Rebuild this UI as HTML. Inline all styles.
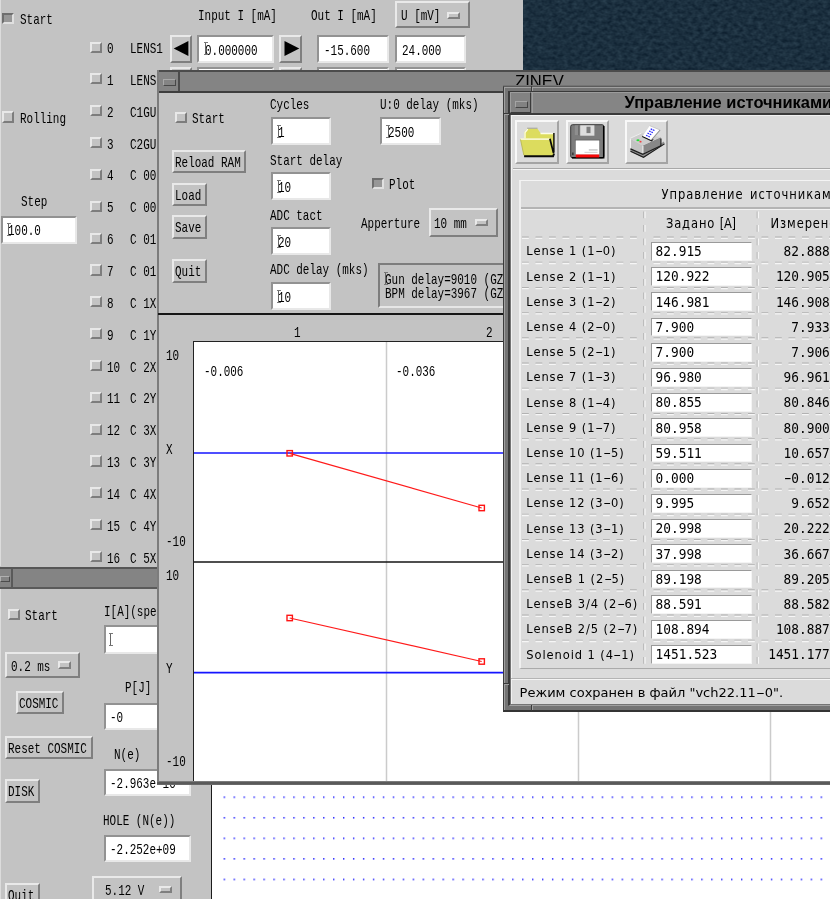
<!DOCTYPE html>
<html><head><meta charset="utf-8"><title>screen</title>
<style>
html,body{margin:0;padding:0}
body{width:830px;height:899px;position:relative;overflow:hidden;background:#c3c3c3;font-family:"Liberation Mono",monospace}
div{position:absolute;box-sizing:border-box}
.t{font:14.8px/14px "Liberation Mono",monospace;color:#000;white-space:pre;transform:scaleX(0.74);transform-origin:0 0}
.cb{width:11.2px;height:11.2px;background:#c3c3c3;border:2px solid;border-color:#e8e8e8 #7d7d7d #7d7d7d #e8e8e8}
.cb.on{background:#979797;border-color:#6e6e6e #e0e0e0 #e0e0e0 #6e6e6e}
.en{background:#fff;border:2px solid;border-color:#929292 #e8e8e8 #e8e8e8 #929292}
.bt{background:#c3c3c3;border:2px solid;border-color:#e9e9e9 #7f7f7f #7f7f7f #e9e9e9}
.ind{width:13.4px;height:7.4px;background:#c3c3c3;border:2px solid;border-color:#e9e9e9 #7f7f7f #7f7f7f #e9e9e9}
.ibeam{width:4px;height:13px}
.ibeam:before{content:"";position:absolute;left:1.5px;top:1px;width:1px;height:11px;background:#666}
.ibeam:after{content:"";position:absolute;left:0;top:0;width:4px;height:13px;border-top:1px solid #777;border-bottom:1px solid #777;box-sizing:border-box}
.win{overflow:hidden}
.m{font-family:"DejaVu Sans Mono","Liberation Mono",monospace;font-size:12.8px;line-height:16px;color:#000;white-space:pre;transform:scaleY(1.07)}
.l{font-family:"DejaVu Sans","Liberation Sans",sans-serif;font-size:11.5px;line-height:16px;letter-spacing:.9px;color:#000;white-space:pre;transform:scaleY(1.07)}
.d{display:inline-block;transform:scaleX(1.9);margin:0 1.6px;letter-spacing:0}
.d2{display:inline-block;transform:scaleX(1.7)}
#root{left:0;top:0;width:830px;height:899px;will-change:transform}
</style></head><body><div id="root">

<div class="win" id="w1" style="left:0;top:0;width:523px;height:568px;background:#c3c3c3">
<div style="left:0;top:0;width:1px;height:568px;background:#dcdcdc"></div>
<div class="cb on" style="left:2.4px;top:12.8px"></div>
<div class="t " style="left:20px;top:13.32px">Start</div>
<div class="cb" style="left:2.4px;top:111.4px"></div>
<div class="t " style="left:20px;top:112.32px">Rolling</div>
<div class="t " style="left:21px;top:195.32px">Step</div>
<div class="en" style="left:1.0px;top:215.7px;width:76px;height:27.9px"></div>
<div class="t " style="left:8px;top:224.32px">100.0</div>
<div class="ibeam" style="left:6.5px;top:223px"></div>
<div class="t " style="left:197.5px;top:8.82px">Input I [mA]</div>
<div class="t " style="left:311px;top:8.82px">Out I [mA]</div>
<div class="bt" style="left:394.6px;top:0.5px;width:75.4px;height:27.9px"></div>
<div class="t " style="left:400.5px;top:9.02px">U [mV]</div>
<div class="ind" style="left:447.1px;top:11.8px"></div>
<div class="cb" style="left:90.4px;top:41.5px"></div>
<div class="t " style="left:107px;top:42.12px">0</div>
<div class="t " style="left:130px;top:42.12px">LENS1</div>
<div class="cb" style="left:90.4px;top:73.3px"></div>
<div class="t " style="left:107px;top:73.96px">1</div>
<div class="t " style="left:130px;top:73.96px">LENS</div>
<div class="cb" style="left:90.4px;top:105.2px"></div>
<div class="t " style="left:107px;top:105.8px">2</div>
<div class="t " style="left:130px;top:105.8px">C1GU</div>
<div class="cb" style="left:90.4px;top:137.0px"></div>
<div class="t " style="left:107px;top:137.64px">3</div>
<div class="t " style="left:130px;top:137.64px">C2GU</div>
<div class="cb" style="left:90.4px;top:168.9px"></div>
<div class="t " style="left:107px;top:169.48px">4</div>
<div class="t " style="left:130px;top:169.48px">C 00</div>
<div class="cb" style="left:90.4px;top:200.7px"></div>
<div class="t " style="left:107px;top:201.32px">5</div>
<div class="t " style="left:130px;top:201.32px">C 00</div>
<div class="cb" style="left:90.4px;top:232.5px"></div>
<div class="t " style="left:107px;top:233.16px">6</div>
<div class="t " style="left:130px;top:233.16px">C 01</div>
<div class="cb" style="left:90.4px;top:264.4px"></div>
<div class="t " style="left:107px;top:265.0px">7</div>
<div class="t " style="left:130px;top:265.0px">C 01</div>
<div class="cb" style="left:90.4px;top:296.2px"></div>
<div class="t " style="left:107px;top:296.84px">8</div>
<div class="t " style="left:130px;top:296.84px">C 1X</div>
<div class="cb" style="left:90.4px;top:328.1px"></div>
<div class="t " style="left:107px;top:328.68px">9</div>
<div class="t " style="left:130px;top:328.68px">C 1Y</div>
<div class="cb" style="left:90.4px;top:359.9px"></div>
<div class="t " style="left:107px;top:360.52px">10</div>
<div class="t " style="left:130px;top:360.52px">C 2X</div>
<div class="cb" style="left:90.4px;top:391.7px"></div>
<div class="t " style="left:107px;top:392.36px">11</div>
<div class="t " style="left:130px;top:392.36px">C 2Y</div>
<div class="cb" style="left:90.4px;top:423.6px"></div>
<div class="t " style="left:107px;top:424.2px">12</div>
<div class="t " style="left:130px;top:424.2px">C 3X</div>
<div class="cb" style="left:90.4px;top:455.4px"></div>
<div class="t " style="left:107px;top:456.04px">13</div>
<div class="t " style="left:130px;top:456.04px">C 3Y</div>
<div class="cb" style="left:90.4px;top:487.3px"></div>
<div class="t " style="left:107px;top:487.88px">14</div>
<div class="t " style="left:130px;top:487.88px">C 4X</div>
<div class="cb" style="left:90.4px;top:519.1px"></div>
<div class="t " style="left:107px;top:519.72px">15</div>
<div class="t " style="left:130px;top:519.72px">C 4Y</div>
<div class="cb" style="left:90.4px;top:550.9px"></div>
<div class="t " style="left:107px;top:551.56px">16</div>
<div class="t " style="left:130px;top:551.56px">C 5X</div>
<div class="bt" style="left:169.8px;top:35.3px;width:21.8px;height:28px"><svg width="20" height="24" style="position:absolute;left:0;top:0"><path d="M1.7 11.4 L16.4 3.9 L16.4 18.9 Z" fill="#000"/></svg></div>
<div class="en" style="left:197px;top:35.3px;width:77.4px;height:28px"></div>
<div class="t " style="left:205px;top:43.62px">0.000000</div>
<div class="ibeam" style="left:203.5px;top:42.3px"></div>
<div class="bt" style="left:278.7px;top:35.3px;width:23.5px;height:28px"><svg width="20" height="24" style="position:absolute;left:0;top:0"><path d="M18.3 11.4 L3.5 3.9 L3.5 18.9 Z" fill="#000"/></svg></div>
<div class="en" style="left:317.3px;top:35.3px;width:71.5px;height:28px"></div>
<div class="t " style="left:324px;top:43.62px">-15.600</div>
<div class="en" style="left:395px;top:35.3px;width:71px;height:28px"></div>
<div class="t " style="left:402px;top:43.62px">24.000</div>
<div class="bt" style="left:169.8px;top:67.14px;width:21.8px;height:28px"><svg width="20" height="24" style="position:absolute;left:0;top:0"><path d="M1.7 11.4 L16.4 3.9 L16.4 18.9 Z" fill="#000"/></svg></div>
<div class="en" style="left:197px;top:67.14px;width:77.4px;height:28px"></div>
<div class="bt" style="left:278.7px;top:67.14px;width:23.5px;height:28px"><svg width="20" height="24" style="position:absolute;left:0;top:0"><path d="M18.3 11.4 L3.5 3.9 L3.5 18.9 Z" fill="#000"/></svg></div>
<div class="en" style="left:317.3px;top:67.14px;width:71.5px;height:28px"></div>
<div class="en" style="left:395px;top:67.14px;width:71px;height:28px"></div>
</div>
<div id="desk" style="left:523px;top:0;width:307px;height:70px;background:#1c303f"><svg width="307" height="70" style="position:absolute;left:0;top:0"><filter id="nz" x="0" y="0" width="100%" height="100%" color-interpolation-filters="sRGB"><feTurbulence type="fractalNoise" baseFrequency="0.2 0.28" numOctaves="2" seed="7"/><feColorMatrix type="matrix" values="0.15 0 0 0 0.032  0.17 0 0 0 0.1  0.17 0 0 0 0.16  0 0 0 0 1"/></filter><rect width="307" height="70" filter="url(#nz)"/></svg></div>
<div class="win" id="w4" style="left:0;top:566px;width:212px;height:333px;background:#c3c3c3">
<div style="left:0;top:1px;width:212px;height:22px;background:#848484;border-top:2px solid #565656;border-bottom:2px solid #5a5a5a"></div>
<div style="left:11.3px;top:3px;width:2px;height:18px;background:#5a5a5a"></div>
<div style="left:0;top:9.8px;width:9.5px;height:6.5px;background:#848484;border:1px solid;border-color:#b0b0b0 #4c4c4c #4c4c4c #b0b0b0"></div>
<div style="left:0;top:23px;width:1.2px;height:311px;background:#dcdcdc"></div>
<div class="cb" style="left:8.4px;top:43.0px"></div>
<div class="t " style="left:25px;top:43.42px">Start</div>
<div class="t " style="left:104px;top:38.82px">I[A](spec)</div>
<div class="en" style="left:103.5px;top:59.2px;width:87.9px;height:28.4px"></div>
<div class="t " style="left:110px;top:67.82px"></div>
<div class="ibeam" style="left:108.5px;top:66.5px"></div>
<div class="bt" style="left:5.1px;top:85.5px;width:75.4px;height:26.9px"></div>
<div class="t " style="left:11px;top:94.02px">0.2 ms</div>
<div class="ind" style="left:57.6px;top:95.3px"></div>
<div class="t " style="left:124.5px;top:115.32px">P[J]</div>
<div class="bt" style="left:16.3px;top:124.7px;width:47.7px;height:23.1px"></div>
<div class="t " style="left:19.3px;top:130.62px">COSMIC</div>
<div class="en" style="left:103.5px;top:136.7px;width:87.9px;height:27.4px"></div>
<div class="t " style="left:110px;top:145.32px">-0</div>
<div class="bt" style="left:4.8px;top:170.2px;width:88.1px;height:23.1px"></div>
<div class="t " style="left:8.3px;top:176.12px">Reset COSMIC</div>
<div class="t " style="left:114px;top:181.82px">N(e)</div>
<div class="en" style="left:103.5px;top:202.7px;width:87.9px;height:27.4px"></div>
<div class="t " style="left:110px;top:211.32px">-2.963e-10</div>
<div class="bt" style="left:5.0px;top:213.4px;width:35.4px;height:23.2px"></div>
<div class="t " style="left:8.3px;top:219.32px">DISK</div>
<div class="t " style="left:102.5px;top:247.82px">HOLE (N(e))</div>
<div class="en" style="left:103.5px;top:268.7px;width:87.9px;height:27.4px"></div>
<div class="t " style="left:110px;top:277.32px">-2.252e+09</div>
<div class="bt" style="left:92.1px;top:309.7px;width:89.6px;height:27.4px"></div>
<div class="t " style="left:104.8px;top:318.22px">5.12 V</div>
<div class="ind" style="left:158.6px;top:319.8px"></div>
<div class="bt" style="left:5.0px;top:317.4px;width:35.1px;height:22.6px"></div>
<div class="t " style="left:8.3px;top:323.32px">Quit</div>
</div>
<div id="cv" style="left:211px;top:782px;width:619px;height:117px;background:#fff;border-left:1.4px solid #1c1c1c">
<svg width="619" height="117" style="position:absolute;left:0;top:0"><defs><pattern id="dots" x="11.6" y="14.4" width="9.95" height="20.55" patternUnits="userSpaceOnUse"><rect x="0" y="0" width="1.4" height="1.6" fill="#2a2aff"/></pattern></defs><rect x="11" y="14" width="600.2" height="86" fill="url(#dots)"/></svg>
</div>
<div class="win" id="w2" style="left:157px;top:70px;width:673px;height:715px;background:#c3c3c3">
<div style="left:0;top:0;width:680px;height:23px;background:#848484;border-top:2px solid #4c4c4c;border-bottom:2.2px solid #3e3e3e"></div>
<div style="left:0;top:0;width:2px;height:715px;background:#7c7c7c"></div>
<div style="left:21.2px;top:2px;width:2.2px;height:19px;background:#4c4c4c"></div>
<div style="left:6.3px;top:8.8px;width:12.6px;height:7px;background:#848484;border:1.2px solid;border-color:#a8a8a8 #484848 #484848 #a8a8a8"></div>
<div style="left:358px;top:1px;width:60px;height:13.7px;overflow:hidden"><div style="left:0;top:2.1px;font:16.6px/18px 'Liberation Sans',sans-serif;color:#000;white-space:pre">ZINEV</div></div>
<div class="cb" style="left:18.4px;top:42.0px"></div>
<div class="t " style="left:35px;top:41.82px">Start</div>
<div class="t " style="left:112.5px;top:27.82px">Cycles</div>
<div class="en" style="left:113.5px;top:47.2px;width:60px;height:27.9px"></div>
<div class="t " style="left:121px;top:55.82px">1</div>
<div class="ibeam" style="left:119.5px;top:54.5px"></div>
<div class="t " style="left:223px;top:27.82px">U:0 delay (mks)</div>
<div class="en" style="left:223.0px;top:47.2px;width:60.5px;height:27.9px"></div>
<div class="t " style="left:230.5px;top:55.82px">2500</div>
<div class="ibeam" style="left:229.0px;top:54.5px"></div>
<div class="bt" style="left:14.5px;top:80.4px;width:74.6px;height:23.1px"></div>
<div class="t " style="left:18.3px;top:86.32px">Reload RAM</div>
<div class="t " style="left:112.5px;top:83.82px">Start delay</div>
<div class="en" style="left:113.5px;top:102.2px;width:60px;height:27.9px"></div>
<div class="t " style="left:121px;top:110.82px">10</div>
<div class="ibeam" style="left:119.5px;top:109.5px"></div>
<div class="bt" style="left:14.5px;top:113.4px;width:35.6px;height:23.1px"></div>
<div class="t " style="left:18.3px;top:119.32px">Load</div>
<div class="cb on" style="left:215.4px;top:107.9px"></div>
<div class="t " style="left:232px;top:108.12px">Plot</div>
<div class="t " style="left:112.5px;top:138.82px">ADC tact</div>
<div class="en" style="left:113.5px;top:157.2px;width:60px;height:27.9px"></div>
<div class="t " style="left:121px;top:165.82px">20</div>
<div class="ibeam" style="left:119.5px;top:164.5px"></div>
<div class="bt" style="left:14.5px;top:145.4px;width:35.6px;height:23.6px"></div>
<div class="t " style="left:18.3px;top:151.32px">Save</div>
<div class="t " style="left:204px;top:146.82px">Apperture</div>
<div class="bt" style="left:271.6px;top:138.2px;width:69.6px;height:28.7px"></div>
<div class="t " style="left:277px;top:146.72px">10 mm</div>
<div class="ind" style="left:317.6px;top:148.8px"></div>
<div class="bt" style="left:14.5px;top:189.4px;width:35.6px;height:23.6px"></div>
<div class="t " style="left:18.3px;top:195.32px">Quit</div>
<div class="t " style="left:112.5px;top:193.32px">ADC delay (mks)</div>
<div class="en" style="left:113.5px;top:212.2px;width:60px;height:27.9px"></div>
<div class="t " style="left:121px;top:220.82px">10</div>
<div class="ibeam" style="left:119.5px;top:219.5px"></div>
<div style="left:220.8px;top:192.8px;width:300px;height:45px;background:#c3c3c3;border:2px solid;border-color:#7d7d7d #e6e6e6 #e6e6e6 #7d7d7d"></div>
<div class="t " style="left:228px;top:202.82px">Gun delay=9010 (GZ</div>
<div class="t " style="left:228px;top:217.12px">BPM delay=3967 (GZ</div>
<div class="ibeam" style="left:226.5px;top:201.5px"></div>
<div style="left:1px;top:243.2px;width:680px;height:1.7px;background:#161616"></div>
<div style="left:36px;top:271px;width:637px;height:441.5px;background:#fff;border-left:1.3px solid #222;border-top:1.3px solid #222"></div>
<svg width="680" height="715" style="position:absolute;left:0;top:0">
<line x1="229.5" y1="272" x2="229.5" y2="712" stroke="#cbcbcb" stroke-width="1.5"/>
<line x1="421.5" y1="272" x2="421.5" y2="712" stroke="#cbcbcb" stroke-width="1.5"/>
<line x1="613.5" y1="272" x2="613.5" y2="712" stroke="#cbcbcb" stroke-width="1.5"/>
<line x1="37" y1="491.9" x2="680" y2="491.9" stroke="#141414" stroke-width="1.5"/>
<line x1="37" y1="382.9" x2="680" y2="382.9" stroke="#1414ff" stroke-width="1.55"/>
<line x1="37" y1="602.6" x2="680" y2="602.6" stroke="#1414ff" stroke-width="1.55"/>
<line x1="132.7" y1="383.3" x2="324.7" y2="438" stroke="#ff1a1a" stroke-width="1.25"/>
<rect x="130.0" y="380.6" width="5.4" height="5.4" fill="none" stroke="#ff1414" stroke-width="1.4"/>
<rect x="322.0" y="435.3" width="5.4" height="5.4" fill="none" stroke="#ff1414" stroke-width="1.4"/>
<line x1="132.7" y1="548" x2="324.7" y2="591.5" stroke="#ff1a1a" stroke-width="1.25"/>
<rect x="130.0" y="545.3" width="5.4" height="5.4" fill="none" stroke="#ff1414" stroke-width="1.4"/>
<rect x="322.0" y="588.8" width="5.4" height="5.4" fill="none" stroke="#ff1414" stroke-width="1.4"/>
</svg>
<div class="t " style="left:137px;top:255.82px">1</div>
<div class="t " style="left:329px;top:255.82px">2</div>
<div class="t " style="left:8.5px;top:279.32px">10</div>
<div class="t " style="left:9px;top:372.82px">X</div>
<div class="t " style="left:8.5px;top:465.32px">-10</div>
<div class="t " style="left:8.5px;top:498.82px">10</div>
<div class="t " style="left:9px;top:591.82px">Y</div>
<div class="t " style="left:8.5px;top:685.32px">-10</div>
<div class="t " style="left:47px;top:294.82px">-0.006</div>
<div class="t " style="left:239px;top:294.82px">-0.036</div>
<div style="left:0;top:711.3px;width:680px;height:4.6px;background:linear-gradient(#8c8c8c,#525252 35%,#606060 65%,#9c9c9c)"></div>
</div>
<div class="win" id="w3" style="left:503px;top:85px;width:327px;height:627px;background:#747474">
<div style="left:0;top:0.8px;width:327px;height:626.2px;border:solid;border-width:1px 0 2.6px 1px;border-color:#5c5c5c #3a3a3a #343434 #3c3c3c"></div>
<div style="left:1px;top:1.8px;width:327px;height:623.2px;border:solid;border-width:1.2px 0 0 1.2px;border-color:#a0a0a0"></div>
<div style="left:5.4px;top:5.8px;width:327px;height:615.2px;border:solid;border-width:1.5px 0 1.5px 2.2px;border-color:#3a3a3a #a0a0a0 #a0a0a0 #3a3a3a"></div>
<div style="left:0;top:27.9px;width:6px;height:1.2px;background:#3a3a3a"></div><div style="left:1px;top:29.1px;width:5px;height:1px;background:#a0a0a0"></div>
<div style="left:27.5px;top:1px;width:1.5px;height:5px;background:#3a3a3a"></div><div style="left:29px;top:2px;width:1px;height:4px;background:#a0a0a0"></div>
<div style="left:0;top:598px;width:6px;height:1.2px;background:#3a3a3a"></div><div style="left:1px;top:599.2px;width:5px;height:1px;background:#a0a0a0"></div>
<div style="left:27.5px;top:620px;width:1.5px;height:6px;background:#3a3a3a"></div><div style="left:29px;top:620px;width:1px;height:5px;background:#a0a0a0"></div>
<div style="left:6.9px;top:7.3px;width:327px;height:21px;background:#858585;border-top:1.3px solid #9c9c9c;border-bottom:0 solid #3a3a3a"></div>
<div style="left:6.9px;top:28.2px;width:327px;height:1.5px;background:#3a3a3a"></div>
<div style="left:6.9px;top:7.3px;width:21.2px;height:21px;background:#828282;border:1.2px solid;border-color:#9c9c9c #3a3a3a #3a3a3a #9c9c9c"></div>
<div style="left:12.3px;top:16px;width:12.7px;height:6.5px;background:#828282;border:1.2px solid;border-color:#a4a4a4 #454545 #454545 #a4a4a4"></div>
<div style="left:29px;top:7.3px;width:1.2px;height:21px;background:#9c9c9c"></div>
<div id="w3title" style="left:121.6px;top:7.3px;font:bold 16.45px/20px 'Liberation Sans',sans-serif;color:#000;white-space:pre">Управление источниками</div>
<div id="w3c" style="left:7.5px;top:29.5px;width:319.5px;height:589.5px;background:#dbdbdb;overflow:hidden"><div style="left:0;top:0;width:400px;height:700px;border-left:1.5px solid #f2f2f2;border-top:1.3px solid #f2f2f2"></div>
<div style="left:4.5px;top:5.5px;width:43.6px;height:44px;background:#dbdbdb;border:2px solid;border-color:#f8f8f8 #a4a4a4 #a4a4a4 #f8f8f8"></div>
<div style="left:55.3px;top:5.5px;width:43.6px;height:44px;background:#dbdbdb;border:2px solid;border-color:#f8f8f8 #a4a4a4 #a4a4a4 #f8f8f8"></div>
<div style="left:114.1px;top:5.5px;width:43.6px;height:44px;background:#dbdbdb;border:2px solid;border-color:#f8f8f8 #a4a4a4 #a4a4a4 #f8f8f8"></div>
<svg width="319.5" height="60" viewBox="510.5 114.5 319.5 60" style="position:absolute;left:0;top:0">
<path d="M523.8 141 L523.8 131.8 L527 127.9 L536.8 127.9 L540 132.5 L553.6 132.5 L553.6 153 L551 156 L524 156 Z" fill="#dcdc5e"/>
<path d="M526.6 127.7 H537" stroke="#9c9c9c" stroke-width="0.9"/>
<path d="M524.5 138 V132 L527.3 128.7 M540 133 H552.5" stroke="#fdfde8" stroke-width="1.3" fill="none"/>
<path d="M553.4 132.6 V152 M552.8 147.5 V152.5" stroke="#0a0a0a" stroke-width="1.4" fill="none"/>
<path d="M519.8 138.3 L549.3 138.3 L553 155 L523.3 155 Z" fill="#dcdc5e"/>
<path d="M520 138.6 L549 138.6" stroke="#fffff4" stroke-width="1.3"/>
<path d="M549.4 138.2 L553 152.5" stroke="#0a0a0a" stroke-width="1.7"/>
<path d="M523.6 155.8 H552.6 L553.6 153" stroke="#0a0a0a" stroke-width="1.9" fill="none"/>
<path d="M520 139 L523.3 154.5" stroke="#b4b450" stroke-width="0.8"/>
<rect x="570.2" y="124.2" width="33.2" height="33.2" rx="1.8" fill="#7c7c7c" stroke="#2a2a2a" stroke-width="0.9"/>
<path d="M603.2 125.5 V157.2 H571.5" stroke="#000" stroke-width="1.5" fill="none"/>
<rect x="574.3" y="124.8" width="4.8" height="9.8" fill="#8e8e8e"/><rect x="577.6" y="124.8" width="1.4" height="9.8" fill="#6a6a6a"/>
<rect x="579.7" y="124.8" width="14.2" height="10.4" fill="#dedede"/>
<rect x="586" y="126.2" width="4" height="6.4" fill="#7e7e7e"/>
<rect x="574.3" y="139" width="25.4" height="1.1" fill="#666"/>
<rect x="575.3" y="140" width="23.4" height="14.2" fill="#fff"/>
<rect x="575.3" y="154" width="23.4" height="3" fill="#f80808"/>
<rect x="588.3" y="149" width="8.8" height="0.9" fill="#a8a8a8"/><rect x="584" y="151.3" width="13" height="1.2" fill="#d6d6d6"/>
<rect x="571.9" y="152" width="1" height="2.6" fill="#111"/>
<path d="M629.8 148.5 L642.5 154 L663.5 141 L664 143.5 L643 157.2 L630 151.2 Z" fill="#8e8e8e"/>
<path d="M630 150.8 L643 156.8 L664 143.4" stroke="#1c1c1c" stroke-width="1.1" fill="none"/>
<path d="M629.5 137.9 L642.2 144.9 L642.2 153.5 L630 148 Z" fill="#c2c2c2"/>
<path d="M642.2 144.9 L660.2 136.8 L660.2 145 L642.2 153.5 Z" fill="#888"/>
<path d="M629.5 137.9 L641 132.4 L660.2 136.8 L642.2 144.9 Z" fill="#cdcdcd"/>
<path d="M630 148.4 L642.3 153.9 L660.4 145.2 L660.4 138" stroke="#1c1c1c" stroke-width="1.2" fill="none"/>
<path d="M629.9 138.3 V147.5 M642.4 145.3 V152.5" stroke="#f4f4f4" stroke-width="1.1" fill="none"/>
<path d="M629.7 137.8 L641 132.6" stroke="#f0f0f0" stroke-width="0.9" fill="none"/>
<path d="M641.8 135.8 L651 140.3 L652.6 138.6" stroke="#151515" stroke-width="1.3" fill="none"/>
<path d="M649.2 125.2 L659.6 129.5 L650.9 139.5 L642.2 135.4 Z" fill="#fff"/>
<path d="M659.6 129.5 L650.9 139.5" stroke="#8c8c8c" stroke-width="1.1"/><path d="M649.2 125.2 L659.6 129.5" stroke="#bbb" stroke-width="0.7"/>
<path d="M650.2 128.4 L654.6 130.3 M648.6 130.5 L653 132.4 M647 132.6 L651.4 134.5 M645.6 134.8 L649.8 136.7" stroke="#2a2aff" stroke-width="1.25" stroke-dasharray="1.7 0.7"/>
<ellipse cx="637.5" cy="139.8" rx="1.6" ry="1" fill="#22dd33"/><ellipse cx="640" cy="141.2" rx="1.1" ry="0.9" fill="#f04040"/>
</svg>
<div style="left:2px;top:53.3px;width:400px;height:1.2px;background:#a8a8a8"></div><div style="left:2px;top:54.5px;width:400px;height:1px;background:#f4f4f4"></div>
<div style="left:8.5px;top:65.5px;width:400px;height:488.6px;border:solid;border-width:1.5px 0 1.5px 2px;border-color:#f4f4f4 #aaa #aaa #f0f0f0"></div>
<div style="left:10.5px;top:92.7px;width:400px;height:1.4px;background:#b4b4b4"></div><div style="left:10.5px;top:94.1px;width:400px;height:1.2px;background:#f2f2f2"></div>
<svg width="319.5" height="589.5" viewBox="510.5 114.5 319.5 589.5" style="position:absolute;left:0;top:0">
<line x1="521.5" y1="236.6" x2="643" y2="236.6" stroke="#b2b2b2" stroke-width="1.1" stroke-dasharray="6.8 6.7"/>
<line x1="521.5" y1="237.8" x2="643" y2="237.8" stroke="#f6f6f6" stroke-width="1.3" stroke-dasharray="6.8 6.7"/>
<line x1="653" y1="236.6" x2="830" y2="236.6" stroke="#b2b2b2" stroke-width="1.1" stroke-dasharray="6.8 6.7"/>
<line x1="653" y1="237.8" x2="830" y2="237.8" stroke="#f6f6f6" stroke-width="1.3" stroke-dasharray="6.8 6.7"/>
<line x1="521.5" y1="261.8" x2="643" y2="261.8" stroke="#b2b2b2" stroke-width="1.1" stroke-dasharray="6.8 6.7"/>
<line x1="521.5" y1="263.0" x2="643" y2="263.0" stroke="#f6f6f6" stroke-width="1.3" stroke-dasharray="6.8 6.7"/>
<line x1="653" y1="261.8" x2="830" y2="261.8" stroke="#b2b2b2" stroke-width="1.1" stroke-dasharray="6.8 6.7"/>
<line x1="653" y1="263.0" x2="830" y2="263.0" stroke="#f6f6f6" stroke-width="1.3" stroke-dasharray="6.8 6.7"/>
<line x1="521.5" y1="287.0" x2="643" y2="287.0" stroke="#b2b2b2" stroke-width="1.1" stroke-dasharray="6.8 6.7"/>
<line x1="521.5" y1="288.2" x2="643" y2="288.2" stroke="#f6f6f6" stroke-width="1.3" stroke-dasharray="6.8 6.7"/>
<line x1="653" y1="287.0" x2="830" y2="287.0" stroke="#b2b2b2" stroke-width="1.1" stroke-dasharray="6.8 6.7"/>
<line x1="653" y1="288.2" x2="830" y2="288.2" stroke="#f6f6f6" stroke-width="1.3" stroke-dasharray="6.8 6.7"/>
<line x1="521.5" y1="312.2" x2="643" y2="312.2" stroke="#b2b2b2" stroke-width="1.1" stroke-dasharray="6.8 6.7"/>
<line x1="521.5" y1="313.4" x2="643" y2="313.4" stroke="#f6f6f6" stroke-width="1.3" stroke-dasharray="6.8 6.7"/>
<line x1="653" y1="312.2" x2="830" y2="312.2" stroke="#b2b2b2" stroke-width="1.1" stroke-dasharray="6.8 6.7"/>
<line x1="653" y1="313.4" x2="830" y2="313.4" stroke="#f6f6f6" stroke-width="1.3" stroke-dasharray="6.8 6.7"/>
<line x1="521.5" y1="337.4" x2="643" y2="337.4" stroke="#b2b2b2" stroke-width="1.1" stroke-dasharray="6.8 6.7"/>
<line x1="521.5" y1="338.6" x2="643" y2="338.6" stroke="#f6f6f6" stroke-width="1.3" stroke-dasharray="6.8 6.7"/>
<line x1="653" y1="337.4" x2="830" y2="337.4" stroke="#b2b2b2" stroke-width="1.1" stroke-dasharray="6.8 6.7"/>
<line x1="653" y1="338.6" x2="830" y2="338.6" stroke="#f6f6f6" stroke-width="1.3" stroke-dasharray="6.8 6.7"/>
<line x1="521.5" y1="362.6" x2="643" y2="362.6" stroke="#b2b2b2" stroke-width="1.1" stroke-dasharray="6.8 6.7"/>
<line x1="521.5" y1="363.8" x2="643" y2="363.8" stroke="#f6f6f6" stroke-width="1.3" stroke-dasharray="6.8 6.7"/>
<line x1="653" y1="362.6" x2="830" y2="362.6" stroke="#b2b2b2" stroke-width="1.1" stroke-dasharray="6.8 6.7"/>
<line x1="653" y1="363.8" x2="830" y2="363.8" stroke="#f6f6f6" stroke-width="1.3" stroke-dasharray="6.8 6.7"/>
<line x1="521.5" y1="387.8" x2="643" y2="387.8" stroke="#b2b2b2" stroke-width="1.1" stroke-dasharray="6.8 6.7"/>
<line x1="521.5" y1="389.0" x2="643" y2="389.0" stroke="#f6f6f6" stroke-width="1.3" stroke-dasharray="6.8 6.7"/>
<line x1="653" y1="387.8" x2="830" y2="387.8" stroke="#b2b2b2" stroke-width="1.1" stroke-dasharray="6.8 6.7"/>
<line x1="653" y1="389.0" x2="830" y2="389.0" stroke="#f6f6f6" stroke-width="1.3" stroke-dasharray="6.8 6.7"/>
<line x1="521.5" y1="413.0" x2="643" y2="413.0" stroke="#b2b2b2" stroke-width="1.1" stroke-dasharray="6.8 6.7"/>
<line x1="521.5" y1="414.2" x2="643" y2="414.2" stroke="#f6f6f6" stroke-width="1.3" stroke-dasharray="6.8 6.7"/>
<line x1="653" y1="413.0" x2="830" y2="413.0" stroke="#b2b2b2" stroke-width="1.1" stroke-dasharray="6.8 6.7"/>
<line x1="653" y1="414.2" x2="830" y2="414.2" stroke="#f6f6f6" stroke-width="1.3" stroke-dasharray="6.8 6.7"/>
<line x1="521.5" y1="438.2" x2="643" y2="438.2" stroke="#b2b2b2" stroke-width="1.1" stroke-dasharray="6.8 6.7"/>
<line x1="521.5" y1="439.4" x2="643" y2="439.4" stroke="#f6f6f6" stroke-width="1.3" stroke-dasharray="6.8 6.7"/>
<line x1="653" y1="438.2" x2="830" y2="438.2" stroke="#b2b2b2" stroke-width="1.1" stroke-dasharray="6.8 6.7"/>
<line x1="653" y1="439.4" x2="830" y2="439.4" stroke="#f6f6f6" stroke-width="1.3" stroke-dasharray="6.8 6.7"/>
<line x1="521.5" y1="463.4" x2="643" y2="463.4" stroke="#b2b2b2" stroke-width="1.1" stroke-dasharray="6.8 6.7"/>
<line x1="521.5" y1="464.6" x2="643" y2="464.6" stroke="#f6f6f6" stroke-width="1.3" stroke-dasharray="6.8 6.7"/>
<line x1="653" y1="463.4" x2="830" y2="463.4" stroke="#b2b2b2" stroke-width="1.1" stroke-dasharray="6.8 6.7"/>
<line x1="653" y1="464.6" x2="830" y2="464.6" stroke="#f6f6f6" stroke-width="1.3" stroke-dasharray="6.8 6.7"/>
<line x1="521.5" y1="488.6" x2="643" y2="488.6" stroke="#b2b2b2" stroke-width="1.1" stroke-dasharray="6.8 6.7"/>
<line x1="521.5" y1="489.8" x2="643" y2="489.8" stroke="#f6f6f6" stroke-width="1.3" stroke-dasharray="6.8 6.7"/>
<line x1="653" y1="488.6" x2="830" y2="488.6" stroke="#b2b2b2" stroke-width="1.1" stroke-dasharray="6.8 6.7"/>
<line x1="653" y1="489.8" x2="830" y2="489.8" stroke="#f6f6f6" stroke-width="1.3" stroke-dasharray="6.8 6.7"/>
<line x1="521.5" y1="513.8" x2="643" y2="513.8" stroke="#b2b2b2" stroke-width="1.1" stroke-dasharray="6.8 6.7"/>
<line x1="521.5" y1="515.0" x2="643" y2="515.0" stroke="#f6f6f6" stroke-width="1.3" stroke-dasharray="6.8 6.7"/>
<line x1="653" y1="513.8" x2="830" y2="513.8" stroke="#b2b2b2" stroke-width="1.1" stroke-dasharray="6.8 6.7"/>
<line x1="653" y1="515.0" x2="830" y2="515.0" stroke="#f6f6f6" stroke-width="1.3" stroke-dasharray="6.8 6.7"/>
<line x1="521.5" y1="539.0" x2="643" y2="539.0" stroke="#b2b2b2" stroke-width="1.1" stroke-dasharray="6.8 6.7"/>
<line x1="521.5" y1="540.2" x2="643" y2="540.2" stroke="#f6f6f6" stroke-width="1.3" stroke-dasharray="6.8 6.7"/>
<line x1="653" y1="539.0" x2="830" y2="539.0" stroke="#b2b2b2" stroke-width="1.1" stroke-dasharray="6.8 6.7"/>
<line x1="653" y1="540.2" x2="830" y2="540.2" stroke="#f6f6f6" stroke-width="1.3" stroke-dasharray="6.8 6.7"/>
<line x1="521.5" y1="564.2" x2="643" y2="564.2" stroke="#b2b2b2" stroke-width="1.1" stroke-dasharray="6.8 6.7"/>
<line x1="521.5" y1="565.4" x2="643" y2="565.4" stroke="#f6f6f6" stroke-width="1.3" stroke-dasharray="6.8 6.7"/>
<line x1="653" y1="564.2" x2="830" y2="564.2" stroke="#b2b2b2" stroke-width="1.1" stroke-dasharray="6.8 6.7"/>
<line x1="653" y1="565.4" x2="830" y2="565.4" stroke="#f6f6f6" stroke-width="1.3" stroke-dasharray="6.8 6.7"/>
<line x1="521.5" y1="589.4" x2="643" y2="589.4" stroke="#b2b2b2" stroke-width="1.1" stroke-dasharray="6.8 6.7"/>
<line x1="521.5" y1="590.6" x2="643" y2="590.6" stroke="#f6f6f6" stroke-width="1.3" stroke-dasharray="6.8 6.7"/>
<line x1="653" y1="589.4" x2="830" y2="589.4" stroke="#b2b2b2" stroke-width="1.1" stroke-dasharray="6.8 6.7"/>
<line x1="653" y1="590.6" x2="830" y2="590.6" stroke="#f6f6f6" stroke-width="1.3" stroke-dasharray="6.8 6.7"/>
<line x1="521.5" y1="614.6" x2="643" y2="614.6" stroke="#b2b2b2" stroke-width="1.1" stroke-dasharray="6.8 6.7"/>
<line x1="521.5" y1="615.8" x2="643" y2="615.8" stroke="#f6f6f6" stroke-width="1.3" stroke-dasharray="6.8 6.7"/>
<line x1="653" y1="614.6" x2="830" y2="614.6" stroke="#b2b2b2" stroke-width="1.1" stroke-dasharray="6.8 6.7"/>
<line x1="653" y1="615.8" x2="830" y2="615.8" stroke="#f6f6f6" stroke-width="1.3" stroke-dasharray="6.8 6.7"/>
<line x1="521.5" y1="639.8" x2="643" y2="639.8" stroke="#b2b2b2" stroke-width="1.1" stroke-dasharray="6.8 6.7"/>
<line x1="521.5" y1="641.0" x2="643" y2="641.0" stroke="#f6f6f6" stroke-width="1.3" stroke-dasharray="6.8 6.7"/>
<line x1="653" y1="639.8" x2="830" y2="639.8" stroke="#b2b2b2" stroke-width="1.1" stroke-dasharray="6.8 6.7"/>
<line x1="653" y1="641.0" x2="830" y2="641.0" stroke="#f6f6f6" stroke-width="1.3" stroke-dasharray="6.8 6.7"/>
<line x1="643.3" y1="211" x2="643.3" y2="666" stroke="#b2b2b2" stroke-width="1.1" stroke-dasharray="6.8 6.7"/>
<line x1="644.5" y1="211" x2="644.5" y2="666" stroke="#f6f6f6" stroke-width="1.3" stroke-dasharray="6.8 6.7"/>
<line x1="756.7" y1="211" x2="756.7" y2="666" stroke="#b2b2b2" stroke-width="1.1" stroke-dasharray="6.8 6.7"/>
<line x1="757.9000000000001" y1="211" x2="757.9000000000001" y2="666" stroke="#f6f6f6" stroke-width="1.3" stroke-dasharray="6.8 6.7"/>
</svg>
<div class="l" id="hdr1" style="transform:scaleY(1.17);left:151.1px;top:71.8px;letter-spacing:.97px;word-spacing:2px">Управление источниками</div>
<div class="l" id="hdr2" style="transform:scaleY(1.17);left:155.4px;top:100.9px">Задано <span style="letter-spacing:-.3px">[A]</span></div>
<div class="l" id="hdr3" style="transform:scaleY(1.17);left:260.1px;top:100.9px">Измерено <span style="letter-spacing:-.3px">[A]</span></div>
<div class="l rl" style="left:15.8px;top:128.9px">Lense 1 (1<span class="d">-</span>0)</div>
<div style="left:140.3px;top:127.4px;width:101.3px;height:18.9px;background:#fff;border:1.3px solid;border-color:#9a9a9a #f4f4f4 #f4f4f4 #9a9a9a"></div>
<div class="m" style="left:145.1px;top:129.7px">82.915</div>
<div class="m" style="right:0.2px;top:129.7px;text-align:right">82.888</div>
<div class="l rl" style="left:15.8px;top:154.1px">Lense 2 (1<span class="d">-</span>1)</div>
<div style="left:140.3px;top:152.6px;width:101.3px;height:18.9px;background:#fff;border:1.3px solid;border-color:#9a9a9a #f4f4f4 #f4f4f4 #9a9a9a"></div>
<div class="m" style="left:145.1px;top:154.9px">120.922</div>
<div class="m" style="right:0.2px;top:154.9px;text-align:right">120.905</div>
<div class="l rl" style="left:15.8px;top:179.3px">Lense 3 (1<span class="d">-</span>2)</div>
<div style="left:140.3px;top:177.8px;width:101.3px;height:18.9px;background:#fff;border:1.3px solid;border-color:#9a9a9a #f4f4f4 #f4f4f4 #9a9a9a"></div>
<div class="m" style="left:145.1px;top:180.1px">146.981</div>
<div class="m" style="right:0.2px;top:180.1px;text-align:right">146.908</div>
<div class="l rl" style="left:15.8px;top:204.5px">Lense 4 (2<span class="d">-</span>0)</div>
<div style="left:140.3px;top:203.0px;width:101.3px;height:18.9px;background:#fff;border:1.3px solid;border-color:#9a9a9a #f4f4f4 #f4f4f4 #9a9a9a"></div>
<div class="m" style="left:145.1px;top:205.3px">7.900</div>
<div class="m" style="right:0.2px;top:205.3px;text-align:right">7.933</div>
<div class="l rl" style="left:15.8px;top:229.7px">Lense 5 (2<span class="d">-</span>1)</div>
<div style="left:140.3px;top:228.2px;width:101.3px;height:18.9px;background:#fff;border:1.3px solid;border-color:#9a9a9a #f4f4f4 #f4f4f4 #9a9a9a"></div>
<div class="m" style="left:145.1px;top:230.5px">7.900</div>
<div class="m" style="right:0.2px;top:230.5px;text-align:right">7.906</div>
<div class="l rl" style="left:15.8px;top:254.9px">Lense 7 (1<span class="d">-</span>3)</div>
<div style="left:140.3px;top:253.4px;width:101.3px;height:18.9px;background:#fff;border:1.3px solid;border-color:#9a9a9a #f4f4f4 #f4f4f4 #9a9a9a"></div>
<div class="m" style="left:145.1px;top:255.7px">96.980</div>
<div class="m" style="right:0.2px;top:255.7px;text-align:right">96.961</div>
<div class="l rl" style="left:15.8px;top:280.1px">Lense 8 (1<span class="d">-</span>4)</div>
<div style="left:140.3px;top:278.6px;width:101.3px;height:18.9px;background:#fff;border:1.3px solid;border-color:#9a9a9a #f4f4f4 #f4f4f4 #9a9a9a"></div>
<div class="m" style="left:145.1px;top:280.9px">80.855</div>
<div class="m" style="right:0.2px;top:280.9px;text-align:right">80.846</div>
<div class="l rl" style="left:15.8px;top:305.3px">Lense 9 (1<span class="d">-</span>7)</div>
<div style="left:140.3px;top:303.8px;width:101.3px;height:18.9px;background:#fff;border:1.3px solid;border-color:#9a9a9a #f4f4f4 #f4f4f4 #9a9a9a"></div>
<div class="m" style="left:145.1px;top:306.1px">80.958</div>
<div class="m" style="right:0.2px;top:306.1px;text-align:right">80.900</div>
<div class="l rl" style="left:15.8px;top:330.5px">Lense 10 (1<span class="d">-</span>5)</div>
<div style="left:140.3px;top:329.0px;width:101.3px;height:18.9px;background:#fff;border:1.3px solid;border-color:#9a9a9a #f4f4f4 #f4f4f4 #9a9a9a"></div>
<div class="m" style="left:145.1px;top:331.3px">59.511</div>
<div class="m" style="right:0.2px;top:331.3px;text-align:right">10.657</div>
<div class="l rl" style="left:15.8px;top:355.7px">Lense 11 (1<span class="d">-</span>6)</div>
<div style="left:140.3px;top:354.2px;width:101.3px;height:18.9px;background:#fff;border:1.3px solid;border-color:#9a9a9a #f4f4f4 #f4f4f4 #9a9a9a"></div>
<div class="m" style="left:145.1px;top:356.5px">0.000</div>
<div class="m" style="right:0.2px;top:356.5px;text-align:right"><span class="d2">-</span>0.012</div>
<div class="l rl" style="left:15.8px;top:380.9px">Lense 12 (3<span class="d">-</span>0)</div>
<div style="left:140.3px;top:379.4px;width:101.3px;height:18.9px;background:#fff;border:1.3px solid;border-color:#9a9a9a #f4f4f4 #f4f4f4 #9a9a9a"></div>
<div class="m" style="left:145.1px;top:381.7px">9.995</div>
<div class="m" style="right:0.2px;top:381.7px;text-align:right">9.652</div>
<div class="l rl" style="left:15.8px;top:406.1px">Lense 13 (3<span class="d">-</span>1)</div>
<div style="left:140.3px;top:404.6px;width:101.3px;height:18.9px;background:#fff;border:1.3px solid;border-color:#9a9a9a #f4f4f4 #f4f4f4 #9a9a9a"></div>
<div class="m" style="left:145.1px;top:406.9px">20.998</div>
<div class="m" style="right:0.2px;top:406.9px;text-align:right">20.222</div>
<div class="l rl" style="left:15.8px;top:431.3px">Lense 14 (3<span class="d">-</span>2)</div>
<div style="left:140.3px;top:429.8px;width:101.3px;height:18.9px;background:#fff;border:1.3px solid;border-color:#9a9a9a #f4f4f4 #f4f4f4 #9a9a9a"></div>
<div class="m" style="left:145.1px;top:432.1px">37.998</div>
<div class="m" style="right:0.2px;top:432.1px;text-align:right">36.667</div>
<div class="l rl" style="left:15.8px;top:456.5px">LenseB 1 (2<span class="d">-</span>5)</div>
<div style="left:140.3px;top:455.0px;width:101.3px;height:18.9px;background:#fff;border:1.3px solid;border-color:#9a9a9a #f4f4f4 #f4f4f4 #9a9a9a"></div>
<div class="m" style="left:145.1px;top:457.3px">89.198</div>
<div class="m" style="right:0.2px;top:457.3px;text-align:right">89.205</div>
<div class="l rl" style="left:15.8px;top:481.7px">LenseB 3/4 (2<span class="d">-</span>6)</div>
<div style="left:140.3px;top:480.2px;width:101.3px;height:18.9px;background:#fff;border:1.3px solid;border-color:#9a9a9a #f4f4f4 #f4f4f4 #9a9a9a"></div>
<div class="m" style="left:145.1px;top:482.5px">88.591</div>
<div class="m" style="right:0.2px;top:482.5px;text-align:right">88.582</div>
<div class="l rl" style="left:15.8px;top:506.9px">LenseB 2/5 (2<span class="d">-</span>7)</div>
<div style="left:140.3px;top:505.4px;width:101.3px;height:18.9px;background:#fff;border:1.3px solid;border-color:#9a9a9a #f4f4f4 #f4f4f4 #9a9a9a"></div>
<div class="m" style="left:145.1px;top:507.7px">108.894</div>
<div class="m" style="right:0.2px;top:507.7px;text-align:right">108.887</div>
<div class="l rl" style="left:15.8px;top:532.1px">Solenoid 1 (4<span class="d">-</span>1)</div>
<div style="left:140.3px;top:530.6px;width:101.3px;height:18.9px;background:#fff;border:1.3px solid;border-color:#9a9a9a #f4f4f4 #f4f4f4 #9a9a9a"></div>
<div class="m" style="left:145.1px;top:532.9px">1451.523</div>
<div class="m" style="right:0.2px;top:532.9px;text-align:right">1451.177</div>
<div style="left:0;top:563.2px;width:400px;height:1.2px;background:#b4b4b4"></div><div style="left:0;top:564.4px;width:400px;height:1px;background:#f4f4f4"></div>
<div id="stat" style="left:9.1px;top:569.0px;font:13px/18px 'DejaVu Sans','Liberation Sans',sans-serif;color:#000;white-space:pre">Режим сохранен в файл "vch22.11<span class="d" style="margin:0 2.2px">-</span>0".</div>
</div>
</div>
</div></body></html>
